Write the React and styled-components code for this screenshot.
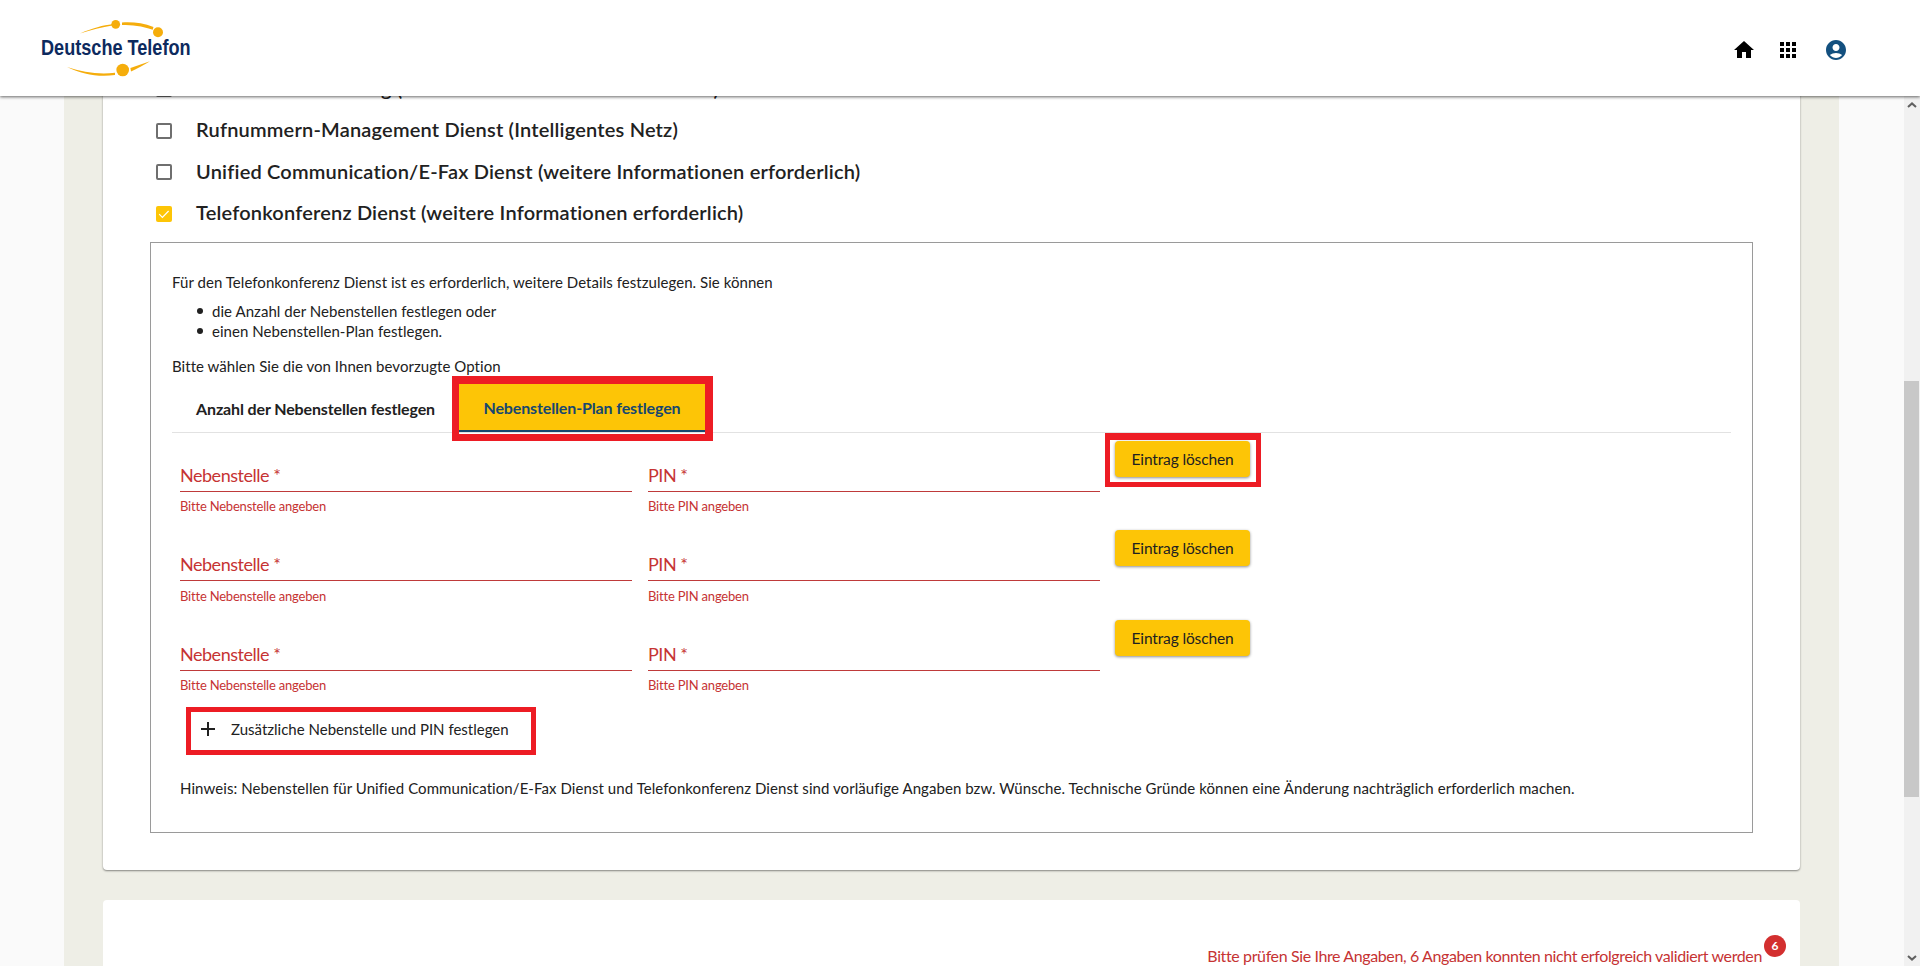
import styled, { createGlobalStyle } from 'styled-components';

const GlobalStyle = createGlobalStyle`
  html, body {
    margin: 0;
    height: 100%;
    overflow: hidden;
    background: #fafafa;
    font-family: Lato, "Noto Sans", sans-serif;
    color: #212121;
  }
`;

const services = [
  { label: 'Anrufweiterschaltung (weitere Informationen erforderlich)', checked: false },
  { label: 'Rufnummern-Management Dienst (Intelligentes Netz)', checked: false },
  { label: 'Unified Communication/E-Fax Dienst (weitere Informationen erforderlich)', checked: false },
  { label: 'Telefonkonferenz Dienst (weitere Informationen erforderlich)', checked: true },
];

const Logo = () => (
  <LogoSvg viewBox="0 0 160 60">
    <g fill="#f5ad0c">
      <path d="M44 15.5C56 10 68 7 76 6.2l.4 1.4C66 9.5 55 12 44 15.5z" />
      <circle cx="79.7" cy="6.3" r="4.4" />
      <path d="M86 4.5c11-.6 21 .4 31.5 4.6l-.8 2.6C106 8 96 7 86 7z" />
      <circle cx="122" cy="14.3" r="5" />
      <path d="M31 49c16 5.5 32 7.6 48 5.8v2.2C62 59.5 46 56 31 49z" />
      <circle cx="86.7" cy="52" r="6.3" />
      <path d="M95 53.5l-.6-3.5L114 43.2C108 47 101 50.5 95 53.5z" />
    </g>
    <text
      transform="translate(5 37) scale(0.788 1)"
      fill="#0d2a5e"
      fontFamily="Liberation Sans"
      fontWeight="700"
      fontSize="23"
    >
      Deutsche Telefon
    </text>
  </LogoSvg>
);

const HomeIcon = () => (
  <svg viewBox="0 0 24 24" width="24" height="24" fill="#000">
    <path d="M10 20v-6h4v6h5v-8h3L12 3 2 12h3v8z" />
  </svg>
);

const AppsIcon = () => (
  <svg viewBox="0 0 24 24" width="24" height="24" fill="#000">
    <path d="M4 8h4V4H4v4zm6 12h4v-4h-4v4zm-6 0h4v-4H4v4zm0-6h4v-4H4v4zm6 0h4v-4h-4v4zm6-10v4h4V4h-4zm-6 4h4V4h-4v4zm6 6h4v-4h-4v4zm0 6h4v-4h-4v4z" />
  </svg>
);

const AccountIcon = () => (
  <svg viewBox="0 0 24 24" width="24" height="24" fill="#13507f">
    <path d="M12 2C6.48 2 2 6.48 2 12s4.48 10 10 10 10-4.48 10-10S17.52 2 12 2zm0 4c1.93 0 3.5 1.57 3.5 3.5S13.93 13 12 13s-3.5-1.57-3.5-3.5S10.07 6 12 6zm0 14c-2.03 0-4.43-.82-6.14-2.88C7.55 15.8 9.68 15 12 15s4.45.8 6.14 2.12C16.43 19.18 14.03 20 12 20z" />
  </svg>
);

const PlusIcon = () => (
  <svg viewBox="0 0 24 24" width="24" height="24" fill="#212121">
    <path d="M19 13h-6v6h-2v-6H5v-2h6V5h2v6h6v2z" />
  </svg>
);

const CheckMark = () => (
  <svg viewBox="0 0 16 16" width="16" height="16" fill="none" stroke="#fff" strokeWidth="1.2">
    <path d="M3.2 8.2l3.2 3.2 6.2-6.4" />
  </svg>
);

const ExtensionRow = ({ highlight }) => (
  <FieldRow>
    <Field>
      <FieldLabel>Nebenstelle *</FieldLabel>
      <FieldError>Bitte Nebenstelle angeben</FieldError>
    </Field>
    <Field>
      <FieldLabel>PIN *</FieldLabel>
      <FieldError>Bitte PIN angeben</FieldError>
    </Field>
    <DeleteButton $highlight={highlight}>Eintrag löschen</DeleteButton>
  </FieldRow>
);

export default function App() {
  return (
    <>
      <GlobalStyle />
      <Header>
        <Logo />
        <HeaderIcons>
          <HomeIcon />
          <AppsIcon />
          <AccountIcon />
        </HeaderIcons>
      </Header>
      <Body>
        <Page>
          <Column>
            <Card>
              {services.map((s) => (
                <ServiceRow key={s.label}>
                  <Checkbox $checked={s.checked}>{s.checked && <CheckMark />}</Checkbox>
                  <ServiceLabel>{s.label}</ServiceLabel>
                </ServiceRow>
              ))}
              <DetailBox>
                <Paragraph>
                  Für den Telefonkonferenz Dienst ist es erforderlich, weitere Details festzulegen. Sie können
                </Paragraph>
                <BulletList>
                  <li>die Anzahl der Nebenstellen festlegen oder</li>
                  <li>einen Nebenstellen-Plan festlegen.</li>
                </BulletList>
                <Paragraph>Bitte wählen Sie die von Ihnen bevorzugte Option</Paragraph>
                <Tabs>
                  <Tab>Anzahl der Nebenstellen festlegen</Tab>
                  <Tab $active>Nebenstellen-Plan festlegen</Tab>
                </Tabs>
                <ExtensionRow highlight />
                <ExtensionRow />
                <ExtensionRow />
                <AddButton>
                  <PlusIcon />
                  Zusätzliche Nebenstelle und PIN festlegen
                </AddButton>
                <Note>
                  Hinweis: Nebenstellen für Unified Communication/E-Fax Dienst und Telefonkonferenz Dienst sind
                  vorläufige Angaben bzw. Wünsche. Technische Gründe können eine Änderung nachträglich erforderlich
                  machen.
                </Note>
              </DetailBox>
            </Card>
            <FooterCard>
              <ValidationText>
                Bitte prüfen Sie Ihre Angaben, 6 Angaben konnten nicht erfolgreich validiert werden
                <Badge>6</Badge>
              </ValidationText>
            </FooterCard>
          </Column>
        </Page>
        <Scrollbar>
          <ScrollArrow>
            <svg viewBox="0 0 10 6" width="10" height="6" fill="none" stroke="#606060" strokeWidth="2">
              <path d="M1 5l4-3.6L9 5" />
            </svg>
          </ScrollArrow>
          <ScrollTrack>
            <ScrollThumb />
          </ScrollTrack>
          <ScrollArrow>
            <svg viewBox="0 0 10 6" width="10" height="6" fill="none" stroke="#606060" strokeWidth="2">
              <path d="M1 1l4 3.6L9 1" />
            </svg>
          </ScrollArrow>
        </Scrollbar>
      </Body>
    </>
  );
}

const Header = styled.header`
  position: relative;
  z-index: 2;
  height: 96px;
  box-sizing: border-box;
  padding: 0 72px 0 36px;
  display: flex;
  align-items: center;
  justify-content: space-between;
  background: #fff;
  box-shadow: 0 1px 3px rgba(0, 0, 0, 0.6);
`;

const LogoSvg = styled.svg`
  width: 160px;
  height: 60px;
`;

const HeaderIcons = styled.div`
  display: flex;
  align-items: center;
  gap: 20px;
  margin-top: 4px;

  svg:last-child {
    margin-left: 4px;
  }
`;

const Body = styled.div`
  display: flex;
  height: 870px;
  overflow: hidden;
`;

const Page = styled.main`
  flex: 1;
  padding: 0 65px 0 64px;
`;

const Column = styled.div`
  padding: 0 39px;
  background: #eeeee6;
  min-height: 100%;
`;

const Card = styled.section`
  margin-top: -27.8px;
  height: 801.8px;
  box-sizing: border-box;
  padding: 0 47px;
  background: #fff;
  border-radius: 4px;
  box-shadow: 0 1px 2px rgba(0, 0, 0, 0.45);
`;

const ServiceRow = styled.div`
  display: flex;
  align-items: center;
  gap: 24px;
  height: 41.6px;
  padding-left: 6px;
`;

const Checkbox = styled.span`
  width: 16px;
  height: 16px;
  box-sizing: border-box;
  flex: none;
  display: flex;
  border-radius: 2px;
  border: ${(p) => (p.$checked ? 'none' : '2px solid #6f6f6f')};
  background: ${(p) => (p.$checked ? '#fdc506' : '#fff')};
`;

const ServiceLabel = styled.span`
  margin-bottom: 3px;
  font-size: 20px;
  font-weight: 600;
  letter-spacing: 0.19px;
  white-space: nowrap;
`;

const DetailBox = styled.div`
  margin-top: 7px;
  height: 591px;
  box-sizing: border-box;
  padding: 29.4px 21px 0;
  border: 1px solid #9a9a9a;
`;

const Paragraph = styled.p`
  margin: 0;
  font-size: 15px;
  line-height: 20px;
  letter-spacing: 0.05px;
  white-space: nowrap;
`;

const BulletList = styled.ul`
  margin: 9px 0 15px;
  padding-left: 25px;
  list-style: none;
  font-size: 15px;
  line-height: 20px;
  letter-spacing: 0.05px;

  li {
    display: flex;
    align-items: center;
    gap: 9px;
  }

  li::before {
    content: '';
    width: 6px;
    height: 6px;
    border-radius: 50%;
    background: #212121;
  }
`;

const Tabs = styled.div`
  display: flex;
  height: 57px;
  border-bottom: 1px solid #e2e2e2;
  box-sizing: border-box;
  align-items: flex-end;
`;

const Tab = styled.div`
  position: relative;
  box-sizing: border-box;
  height: 48px;
  padding-top: 1px;
  display: flex;
  align-items: center;
  justify-content: center;
  font-size: 16px;
  font-weight: 700;
  letter-spacing: -0.13px;
  white-space: nowrap;
  width: ${(p) => (p.$active ? '246px' : '287px')};
  color: ${(p) => (p.$active ? '#17476f' : '#212121')};
  background: ${(p) => (p.$active ? '#fdc506' : 'transparent')};
  border-bottom: ${(p) => (p.$active ? '2px solid #17476f' : 'none')};

  ${(p) =>
    p.$active &&
    `
    &::after {
      content: '';
      position: absolute;
      inset: -8px -8px -11px -7px;
      border: solid #ed1c24;
      border-width: 8px 8px 7px 7px;
    }
  `}
`;

const FieldRow = styled.div`
  display: grid;
  grid-template-columns: 452px 452px 135px;
  column-gap: 16px;
  align-items: start;
  height: 89.5px;
  padding-left: 8px;
  box-sizing: border-box;
`;

const Field = styled.div`
  padding-top: 25px;
`;

const FieldLabel = styled.div`
  height: 34px;
  box-sizing: border-box;
  border-bottom: 1px solid #bf3a3a;
  color: #c63333;
  font-size: 18px;
  line-height: 34px;
  letter-spacing: -0.48px;
`;

const FieldError = styled.div`
  margin-top: 6.5px;
  color: #c63333;
  font-size: 13px;
  line-height: 16px;
  letter-spacing: -0.2px;
`;

const DeleteButton = styled.button`
  position: relative;
  margin: 8px 0 0 -1px;
  height: 36px;
  width: 135px;
  padding: 0;
  border: none;
  border-radius: 4px;
  background: #fdc506;
  color: #212121;
  font-family: inherit;
  font-size: 15.5px;
  letter-spacing: -0.14px;
  box-shadow: 0 1px 3px rgba(0, 0, 0, 0.45);

  ${(p) =>
    p.$highlight &&
    `
    &::after {
      content: '';
      position: absolute;
      inset: -8px -11px -10px -10px;
      border: solid #ed1c24;
      border-width: 7px 5px 5px 5px;
    }
  `}
`;

const AddButton = styled.button`
  display: flex;
  align-items: center;
  gap: 11px;
  width: 340px;
  height: 38px;
  margin: 10.5px 0 0 19px;
  padding: 0 0 3px 5px;
  border: none;
  background: #fff;
  color: #212121;
  font-family: inherit;
  font-size: 15px;
  outline: 5px solid #ed1c24;
`;

const Note = styled.p`
  margin: 27.7px 0 0 8px;
  font-size: 15px;
  line-height: 20px;
  letter-spacing: 0.07px;
  white-space: nowrap;
`;

const FooterCard = styled.section`
  margin-top: 30px;
  height: 100px;
  padding: 46px 38px 0 0;
  background: #fff;
  border-radius: 4px 4px 0 0;
  text-align: right;
`;

const ValidationText = styled.span`
  position: relative;
  color: #c63333;
  font-size: 16px;
  letter-spacing: -0.38px;
`;

const Badge = styled.span`
  position: absolute;
  top: -11px;
  right: -24px;
  width: 22px;
  height: 22px;
  border-radius: 50%;
  background: #d32f2f;
  color: #fff;
  font-size: 12px;
  font-weight: 700;
  line-height: 22px;
  text-align: center;
  letter-spacing: 0;
`;

const Scrollbar = styled.div`
  width: 16px;
  flex: none;
  display: flex;
  flex-direction: column;
  background: #f1f1f1;
`;

const ScrollArrow = styled.div`
  height: 17px;
  display: flex;
  align-items: center;
  justify-content: center;
`;

const ScrollTrack = styled.div`
  flex: 1;
  padding-top: 268px;
`;

const ScrollThumb = styled.div`
  width: 15px;
  height: 416px;
  background: #c8c8c8;
`;
